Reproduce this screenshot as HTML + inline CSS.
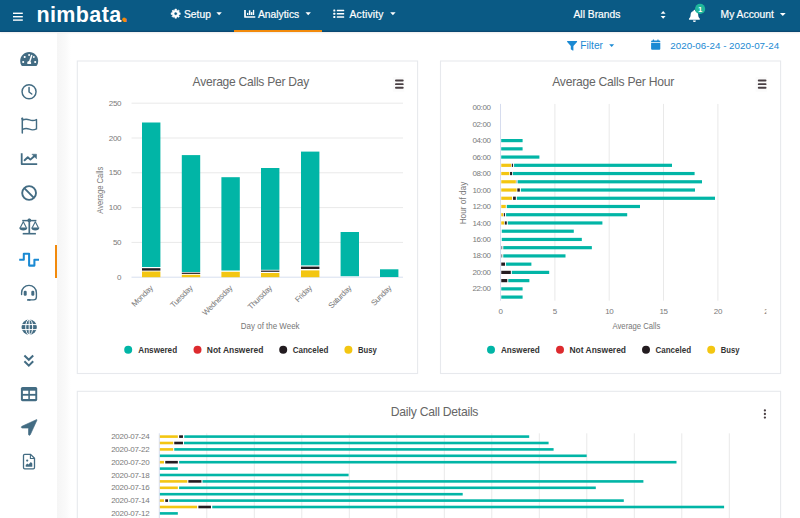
<!DOCTYPE html>
<html lang="en"><head><meta charset="utf-8"><title>nimbata - Analytics</title>
<style>
html,body{margin:0;padding:0}
body{width:800px;height:518px;overflow:hidden;background:#fff;position:relative;font-family:"Liberation Sans",sans-serif;}
#hdr{position:absolute;left:0;top:0;width:800px;height:31.6px;background:#0a5a85;box-shadow:inset 0 -1.2px 0 #0a4872,0 1px 1.5px rgba(0,0,0,.08)}
#hdr .t{position:absolute;color:#fff;font-size:10.3px;line-height:12px;white-space:nowrap;-webkit-text-stroke:.2px #fff}
#logo{position:absolute;left:36.4px;top:2.1px;font-size:21.5px;line-height:26px;font-weight:bold;color:#fff;letter-spacing:0.4px}
#logo b{color:#f28a0c}
#side{position:absolute;left:0;top:31.6px;width:57px;height:487px;background:#fff}
#shade{position:absolute;left:57px;top:33px;width:20px;height:487px;background:linear-gradient(90deg,#f5f5f5,#fafafa 45%,#fff 70%)}
.card{position:absolute;box-sizing:border-box;border:1px solid #e9e9e9;background:#fff}
svg{position:absolute;left:0;top:0}
.ax{font-size:8px;fill:#7a7a7a;font-family:"Liberation Sans",sans-serif;letter-spacing:-0.4px}
.ttl{font-size:12.2px;fill:#666;font-family:"Liberation Sans",sans-serif;letter-spacing:-0.25px}
.at{font-size:9px;fill:#777;font-family:"Liberation Sans",sans-serif}
.lg{font-size:9.1px;font-weight:bold;fill:#333;font-family:"Liberation Sans",sans-serif}
.fl{position:absolute;color:#1b8ad3;font-size:10.2px;line-height:12px;white-space:nowrap}
</style></head><body>
<div id="shade"></div>
<svg width="800" height="518" viewBox="0 0 800 518" fill="#fff" stroke="#e7e9ed" stroke-width="1.1">
<rect x="77.3" y="61" width="340.3" height="312.5"/>
<rect x="440.5" y="61" width="340.1" height="312.5"/>
<rect x="77.3" y="391.3" width="703.3" height="140"/>
</svg>
<svg id="charts" width="800" height="518" viewBox="0 0 800 518">
<line x1="131.5" x2="403" y1="103.2" y2="103.2" stroke="#e9e9e9" stroke-width="1"/>
<text x="121" y="105.8" text-anchor="end" class="ax">250</text>
<line x1="131.5" x2="403" y1="138.0" y2="138.0" stroke="#e9e9e9" stroke-width="1"/>
<text x="121" y="140.6" text-anchor="end" class="ax">200</text>
<line x1="131.5" x2="403" y1="172.8" y2="172.8" stroke="#e9e9e9" stroke-width="1"/>
<text x="121" y="175.4" text-anchor="end" class="ax">150</text>
<line x1="131.5" x2="403" y1="207.6" y2="207.6" stroke="#e9e9e9" stroke-width="1"/>
<text x="121" y="210.2" text-anchor="end" class="ax">100</text>
<line x1="131.5" x2="403" y1="242.4" y2="242.4" stroke="#e9e9e9" stroke-width="1"/>
<text x="121" y="245.0" text-anchor="end" class="ax">50</text>
<text x="121" y="279.8" text-anchor="end" class="ax">0</text>
<line x1="131.5" x2="403" y1="277.2" y2="277.2" stroke="#d3dbee" stroke-width="0.9"/>
<rect x="142.00" y="122.50" width="18.40" height="144.50" fill="#01b5a6"/>
<rect x="142.00" y="268.20" width="18.40" height="2.40" fill="#231c20"/>
<rect x="142.00" y="271.50" width="18.40" height="5.70" fill="#f3c612"/>
<rect x="181.80" y="155.10" width="18.40" height="116.90" fill="#01b5a6"/>
<rect x="181.80" y="272.70" width="18.40" height="1.20" fill="#231c20"/>
<rect x="181.80" y="274.80" width="18.40" height="2.40" fill="#f3c612"/>
<rect x="221.40" y="177.20" width="18.40" height="93.30" fill="#01b5a6"/>
<rect x="221.40" y="271.80" width="18.40" height="5.40" fill="#f3c612"/>
<rect x="261.00" y="168.00" width="18.40" height="101.80" fill="#01b5a6"/>
<rect x="261.00" y="270.60" width="18.40" height="1.20" fill="#231c20"/>
<rect x="261.00" y="273.00" width="18.40" height="4.20" fill="#f3c612"/>
<rect x="301.00" y="151.60" width="18.40" height="113.80" fill="#01b5a6"/>
<rect x="301.00" y="266.60" width="18.40" height="2.40" fill="#231c20"/>
<rect x="301.00" y="270.40" width="18.40" height="6.80" fill="#f3c612"/>
<rect x="340.60" y="232.00" width="18.40" height="44.20" fill="#01b5a6"/>
<rect x="380.00" y="269.30" width="18.40" height="7.70" fill="#01b5a6"/>
<text x="153.2" y="288.7" text-anchor="end" transform="rotate(-45 153.2 288.7)" class="ax">Monday</text>
<text x="193.0" y="288.7" text-anchor="end" transform="rotate(-45 193.0 288.7)" class="ax">Tuesday</text>
<text x="232.7" y="288.7" text-anchor="end" transform="rotate(-45 232.7 288.7)" class="ax">Wednesday</text>
<text x="272.4" y="288.7" text-anchor="end" transform="rotate(-45 272.4 288.7)" class="ax">Thursday</text>
<text x="312.2" y="288.7" text-anchor="end" transform="rotate(-45 312.2 288.7)" class="ax">Friday</text>
<text x="351.9" y="288.7" text-anchor="end" transform="rotate(-45 351.9 288.7)" class="ax">Saturday</text>
<text x="391.7" y="288.7" text-anchor="end" transform="rotate(-45 391.7 288.7)" class="ax">Sunday</text>
<text x="270.2" y="329.2" text-anchor="middle" class="at" textLength="58.7" lengthAdjust="spacingAndGlyphs">Day of the Week</text>
<text x="103" y="190.2" text-anchor="middle" transform="rotate(-90 103 190.2)" class="at" textLength="47.1" lengthAdjust="spacingAndGlyphs">Average Calls</text>
<text x="250.8" y="86.3" text-anchor="middle" class="ttl" textLength="116.4" lengthAdjust="spacingAndGlyphs">Average Calls Per Day</text>
<circle cx="128.2" cy="349.8" r="4" fill="#01b5a6"/>
<text x="138.3" y="352.90000000000003" class="lg" textLength="38.8" lengthAdjust="spacingAndGlyphs">Answered</text>
<circle cx="197.5" cy="349.8" r="4" fill="#dd2a2e"/>
<text x="206.8" y="352.90000000000003" class="lg" textLength="56.5" lengthAdjust="spacingAndGlyphs">Not Answered</text>
<circle cx="283.2" cy="349.8" r="4" fill="#231c20"/>
<text x="292.7" y="352.90000000000003" class="lg" textLength="35.6" lengthAdjust="spacingAndGlyphs">Canceled</text>
<circle cx="348.4" cy="349.8" r="4" fill="#f3c612"/>
<text x="358" y="352.90000000000003" class="lg" textLength="18.7" lengthAdjust="spacingAndGlyphs">Busy</text>
<rect x="392.8" y="77.2" width="11.5" height="14.5" fill="#fbfbfb"/>
<rect x="395.00" y="79.60" width="8.7" height="1.9" rx="0.95" fill="#4a4044"/>
<rect x="395.00" y="83.18" width="8.7" height="1.9" rx="0.95" fill="#4a4044"/>
<rect x="395.00" y="86.76" width="8.7" height="1.9" rx="0.95" fill="#4a4044"/>
<line x1="554.9" x2="554.9" y1="103.9" y2="300.7" stroke="#e9e9e9" stroke-width="1"/>
<line x1="609.2" x2="609.2" y1="103.9" y2="300.7" stroke="#e9e9e9" stroke-width="1"/>
<line x1="663.5" x2="663.5" y1="103.9" y2="300.7" stroke="#e9e9e9" stroke-width="1"/>
<line x1="717.9" x2="717.9" y1="103.9" y2="300.7" stroke="#e9e9e9" stroke-width="1"/>
<line x1="500.5" x2="500.5" y1="103.9" y2="300.7" stroke="#d6dcee" stroke-width="1"/>
<text x="500.5" y="314.4" text-anchor="middle" class="ax">0</text>
<text x="554.9" y="314.4" text-anchor="middle" class="ax">5</text>
<text x="609.2" y="314.4" text-anchor="middle" class="ax">10</text>
<text x="663.5" y="314.4" text-anchor="middle" class="ax">15</text>
<text x="717.9" y="314.4" text-anchor="middle" class="ax">20</text>
<clipPath id="cl25"><rect x="700" y="300" width="66.5" height="30"/></clipPath>
<text x="764.3" y="314.4" class="ax" clip-path="url(#cl25)">25</text>
<text x="490.5" y="110.2" text-anchor="end" class="ax">00:00</text>
<text x="490.5" y="126.6" text-anchor="end" class="ax">02:00</text>
<text x="490.5" y="143.1" text-anchor="end" class="ax">04:00</text>
<text x="490.5" y="159.6" text-anchor="end" class="ax">06:00</text>
<text x="490.5" y="176.0" text-anchor="end" class="ax">08:00</text>
<text x="490.5" y="192.5" text-anchor="end" class="ax">10:00</text>
<text x="490.5" y="209.0" text-anchor="end" class="ax">12:00</text>
<text x="490.5" y="225.5" text-anchor="end" class="ax">14:00</text>
<text x="490.5" y="241.9" text-anchor="end" class="ax">16:00</text>
<text x="490.5" y="258.4" text-anchor="end" class="ax">18:00</text>
<text x="490.5" y="274.9" text-anchor="end" class="ax">20:00</text>
<text x="490.5" y="291.4" text-anchor="end" class="ax">22:00</text>
<rect x="501.20" y="139.00" width="21.40" height="3.20" fill="#01b5a6"/>
<rect x="501.20" y="147.24" width="21.40" height="3.20" fill="#01b5a6"/>
<rect x="501.20" y="155.47" width="38.20" height="3.20" fill="#01b5a6"/>
<rect x="501.27" y="163.71" width="9.79" height="3.20" fill="#f3c612"/>
<rect x="511.81" y="163.71" width="1.25" height="3.20" fill="#231c20"/>
<rect x="514.07" y="163.71" width="157.93" height="3.20" fill="#01b5a6"/>
<rect x="501.27" y="171.95" width="8.03" height="3.20" fill="#f3c612"/>
<rect x="510.05" y="171.95" width="2.01" height="3.20" fill="#231c20"/>
<rect x="512.81" y="171.95" width="181.79" height="3.20" fill="#01b5a6"/>
<rect x="501.27" y="180.18" width="14.55" height="3.20" fill="#f3c612"/>
<rect x="516.32" y="180.18" width="0.50" height="3.20" fill="#888"/>
<rect x="517.58" y="180.18" width="184.42" height="3.20" fill="#01b5a6"/>
<rect x="501.27" y="188.42" width="15.31" height="3.20" fill="#f3c612"/>
<rect x="517.33" y="188.42" width="2.51" height="3.20" fill="#231c20"/>
<rect x="520.84" y="188.42" width="174.16" height="3.20" fill="#01b5a6"/>
<rect x="501.27" y="196.66" width="10.79" height="3.20" fill="#f3c612"/>
<rect x="513.06" y="196.66" width="2.76" height="3.20" fill="#231c20"/>
<rect x="516.83" y="196.66" width="198.17" height="3.20" fill="#01b5a6"/>
<rect x="501.27" y="204.89" width="4.52" height="3.20" fill="#f3c612"/>
<rect x="506.79" y="204.89" width="133.21" height="3.20" fill="#01b5a6"/>
<rect x="501.27" y="213.13" width="1.76" height="3.20" fill="#f3c612"/>
<rect x="503.78" y="213.13" width="1.25" height="3.20" fill="#231c20"/>
<rect x="506.04" y="213.13" width="121.16" height="3.20" fill="#01b5a6"/>
<rect x="501.27" y="221.37" width="2.76" height="3.20" fill="#f3c612"/>
<rect x="504.78" y="221.37" width="2.01" height="3.20" fill="#231c20"/>
<rect x="507.79" y="221.37" width="94.61" height="3.20" fill="#01b5a6"/>
<rect x="501.77" y="229.61" width="72.02" height="3.20" fill="#01b5a6"/>
<rect x="501.77" y="237.84" width="80.05" height="3.20" fill="#01b5a6"/>
<rect x="501.27" y="246.08" width="1.00" height="3.20" fill="#777"/>
<rect x="503.27" y="246.08" width="88.58" height="3.20" fill="#01b5a6"/>
<rect x="501.27" y="254.32" width="1.00" height="3.20" fill="#777"/>
<rect x="503.27" y="254.32" width="62.23" height="3.20" fill="#01b5a6"/>
<rect x="501.27" y="262.55" width="3.76" height="3.20" fill="#231c20"/>
<rect x="506.04" y="262.55" width="25.35" height="3.20" fill="#01b5a6"/>
<rect x="501.27" y="270.79" width="9.54" height="3.20" fill="#231c20"/>
<rect x="511.81" y="270.79" width="37.39" height="3.20" fill="#01b5a6"/>
<rect x="501.27" y="279.03" width="6.02" height="3.20" fill="#231c20"/>
<rect x="508.29" y="279.03" width="21.08" height="3.20" fill="#01b5a6"/>
<rect x="501.27" y="287.26" width="21.33" height="3.20" fill="#01b5a6"/>
<rect x="501.27" y="295.50" width="21.33" height="3.20" fill="#01b5a6"/>
<text x="636.4" y="329.2" text-anchor="middle" class="at" textLength="47.7" lengthAdjust="spacingAndGlyphs">Average Calls</text>
<text x="466" y="203" text-anchor="middle" transform="rotate(-90 466 203)" class="at" textLength="42.7" lengthAdjust="spacingAndGlyphs">Hour of day</text>
<text x="613.1" y="86.3" text-anchor="middle" class="ttl" textLength="121.8" lengthAdjust="spacingAndGlyphs">Average Calls Per Hour</text>
<circle cx="491" cy="349.8" r="4" fill="#01b5a6"/>
<text x="501" y="352.90000000000003" class="lg" textLength="38.8" lengthAdjust="spacingAndGlyphs">Answered</text>
<circle cx="560" cy="349.8" r="4" fill="#dd2a2e"/>
<text x="569.5" y="352.90000000000003" class="lg" textLength="56.5" lengthAdjust="spacingAndGlyphs">Not Answered</text>
<circle cx="646" cy="349.8" r="4" fill="#231c20"/>
<text x="655.5" y="352.90000000000003" class="lg" textLength="35.6" lengthAdjust="spacingAndGlyphs">Canceled</text>
<circle cx="711.2" cy="349.8" r="4" fill="#f3c612"/>
<text x="720.7" y="352.90000000000003" class="lg" textLength="18.7" lengthAdjust="spacingAndGlyphs">Busy</text>
<rect x="755.5999999999999" y="77.2" width="11.5" height="14.5" fill="#fbfbfb"/>
<rect x="757.80" y="79.60" width="8.7" height="1.9" rx="0.95" fill="#4a4044"/>
<rect x="757.80" y="83.18" width="8.7" height="1.9" rx="0.95" fill="#4a4044"/>
<rect x="757.80" y="86.76" width="8.7" height="1.9" rx="0.95" fill="#4a4044"/>
<line x1="206.8" x2="206.8" y1="433.3" y2="518" stroke="#e9e9e9" stroke-width="1"/>
<line x1="254.3" x2="254.3" y1="433.3" y2="518" stroke="#e9e9e9" stroke-width="1"/>
<line x1="301.8" x2="301.8" y1="433.3" y2="518" stroke="#e9e9e9" stroke-width="1"/>
<line x1="349.3" x2="349.3" y1="433.3" y2="518" stroke="#e9e9e9" stroke-width="1"/>
<line x1="396.8" x2="396.8" y1="433.3" y2="518" stroke="#e9e9e9" stroke-width="1"/>
<line x1="444.3" x2="444.3" y1="433.3" y2="518" stroke="#e9e9e9" stroke-width="1"/>
<line x1="491.8" x2="491.8" y1="433.3" y2="518" stroke="#e9e9e9" stroke-width="1"/>
<line x1="539.3" x2="539.3" y1="433.3" y2="518" stroke="#e9e9e9" stroke-width="1"/>
<line x1="586.8" x2="586.8" y1="433.3" y2="518" stroke="#e9e9e9" stroke-width="1"/>
<line x1="634.3" x2="634.3" y1="433.3" y2="518" stroke="#e9e9e9" stroke-width="1"/>
<line x1="681.8" x2="681.8" y1="433.3" y2="518" stroke="#e9e9e9" stroke-width="1"/>
<line x1="729.3" x2="729.3" y1="433.3" y2="518" stroke="#e9e9e9" stroke-width="1"/>
<line x1="159.3" x2="159.3" y1="433.3" y2="518" stroke="#d6dcee" stroke-width="1"/>
<rect x="159.86" y="435.30" width="17.97" height="2.60" fill="#f3c612"/>
<rect x="179.11" y="435.30" width="3.85" height="2.60" fill="#231c20"/>
<rect x="184.25" y="435.30" width="344.95" height="2.60" fill="#01b5a6"/>
<text x="149.2" y="439.1" text-anchor="end" class="ax" textLength="38">2020-07-24</text>
<rect x="159.86" y="441.70" width="13.35" height="2.60" fill="#f3c612"/>
<rect x="174.24" y="441.70" width="8.73" height="2.60" fill="#231c20"/>
<rect x="183.99" y="441.70" width="364.61" height="2.60" fill="#01b5a6"/>
<rect x="159.86" y="448.10" width="13.35" height="2.60" fill="#f3c612"/>
<rect x="174.24" y="448.10" width="379.36" height="2.60" fill="#01b5a6"/>
<text x="149.2" y="451.9" text-anchor="end" class="ax" textLength="38">2020-07-22</text>
<rect x="159.86" y="454.50" width="426.84" height="2.60" fill="#01b5a6"/>
<rect x="159.86" y="460.90" width="4.11" height="2.60" fill="#f3c612"/>
<rect x="165.25" y="460.90" width="12.58" height="2.60" fill="#231c20"/>
<rect x="179.11" y="460.90" width="497.39" height="2.60" fill="#01b5a6"/>
<text x="149.2" y="464.7" text-anchor="end" class="ax" textLength="38">2020-07-20</text>
<rect x="159.86" y="467.30" width="17.97" height="2.60" fill="#01b5a6"/>
<rect x="159.86" y="473.70" width="188.74" height="2.60" fill="#01b5a6"/>
<text x="149.2" y="477.5" text-anchor="end" class="ax" textLength="38">2020-07-18</text>
<rect x="159.86" y="480.10" width="27.47" height="2.60" fill="#f3c612"/>
<rect x="188.36" y="480.10" width="13.09" height="2.60" fill="#231c20"/>
<rect x="202.48" y="480.10" width="440.92" height="2.60" fill="#01b5a6"/>
<rect x="159.86" y="486.50" width="17.97" height="2.60" fill="#f3c612"/>
<rect x="179.11" y="486.50" width="416.69" height="2.60" fill="#01b5a6"/>
<text x="149.2" y="490.3" text-anchor="end" class="ax" textLength="38">2020-07-16</text>
<rect x="159.86" y="492.90" width="302.84" height="2.60" fill="#01b5a6"/>
<rect x="159.86" y="499.30" width="4.11" height="2.60" fill="#f3c612"/>
<rect x="165.25" y="499.30" width="2.82" height="2.60" fill="#231c20"/>
<rect x="169.36" y="499.30" width="454.44" height="2.60" fill="#01b5a6"/>
<text x="149.2" y="503.1" text-anchor="end" class="ax" textLength="38">2020-07-14</text>
<rect x="159.86" y="505.70" width="37.23" height="2.60" fill="#f3c612"/>
<rect x="198.37" y="505.70" width="12.58" height="2.60" fill="#231c20"/>
<rect x="212.23" y="505.70" width="511.87" height="2.60" fill="#01b5a6"/>
<rect x="159.86" y="512.10" width="17.97" height="2.60" fill="#01b5a6"/>
<text x="149.2" y="515.9" text-anchor="end" class="ax" textLength="38">2020-07-12</text>
<text x="434.5" y="415.7" text-anchor="middle" class="ttl" textLength="87.4" lengthAdjust="spacingAndGlyphs">Daily Call Details</text>
<circle cx="764.9" cy="410.4" r="1.15" fill="#4a4044"/>
<circle cx="764.9" cy="414.0" r="1.15" fill="#4a4044"/>
<circle cx="764.9" cy="417.6" r="1.15" fill="#4a4044"/>
</svg>
<div class="fl" style="left:580.3px;top:40.2px">Filter</div>
<div class="fl" style="left:670.3px;top:39.5px;font-size:9.8px">2020-06-24 - 2020-07-24</div>
<svg width="800" height="518" viewBox="0 0 800 518" style="pointer-events:none"><path d="M567.3 41.100h9.300c.5 0 .7.500.4.900l-3.600 4v4.200c0 .4-.4.600-.7.400l-1.600-1.100c-.2-.1-.3-.3-.3-.5v-3l-3.600-4c-.3-.4-.1-.9.400-.9z" fill="#1b8ad3"/>
<path d="M609.2 44.2h4.9l-2.45 2.7z" fill="#1b8ad3"/>
<path d="M651.100 42.900h9.200v5.800a1 1 0 0 1-1 1h-7.200a1 1 0 0 1-1-1z M652.100 40.600h7.200a1 1 0 0 1 1 1v.7h-9.200v-.7a1 1 0 0 1 1-1z" fill="#1b8ad3"/>
<rect x="652.8" y="39.400" width="1.300" height="2.200" rx=".4" fill="#1b8ad3"/><rect x="657.300" y="39.400" width="1.300" height="2.200" rx=".4" fill="#1b8ad3"/></svg>
<div id="side"></div>
<div style="position:absolute;left:55px;top:244.500px;width:2px;height:33px;background:#f28a0c"></div>
<svg width="800" height="518" viewBox="0 0 800 518"><g transform="translate(20.2 50.9) scale(0.03125)"><path d="M288 32C128.940 32 0 160.940 0 320c0 52.800 14.250 102.260 39.060 144.800 5.610 9.620 16.300 15.200 27.440 15.200h443c11.140 0 21.830-5.580 27.440-15.200C561.750 422.260 576 372.800 576 320c0-159.060-128.940-288-288-288zm0 64c14.710 0 26.580 10.130 30.320 23.650-1.110 2.260-2.640 4.230-3.450 6.670l-9.220 27.670c-5.130 3.490-10.970 6.010-17.640 6.010-17.670 0-32-14.330-32-32S270.330 96 288 96zM96 384c-17.670 0-32-14.330-32-32s14.330-32 32-32 32 14.330 32 32-14.330 32-32 32zm48-160c-17.670 0-32-14.330-32-32s14.330-32 32-32 32 14.330 32 32-14.330 32-32 32zm246.770-72.410l-61.330 184C343.130 347.330 352 364.540 352 384c0 11.720-3.380 22.550-8.880 32H232.880c-5.500-9.450-8.880-20.280-8.880-32 0-33.940 26.500-61.430 59.900-63.590l61.340-184.010c4.170-12.560 17.730-19.450 30.360-15.170 12.570 4.190 19.350 17.790 15.170 30.360zm14.660 57.200l15.520-46.550c3.470-1.290 7.130-2.230 11.050-2.230 17.670 0 32 14.330 32 32s-14.330 32-32 32c-11.380-.010-20.890-6.280-26.570-15.220zM480 384c-17.670 0-32-14.330-32-32s14.330-32 32-32 32 14.330 32 32-14.330 32-32 32z" fill="#436c83"/></g>
<circle cx="29.050" cy="91.800" r="7" fill="none" stroke="#436c83" stroke-width="1.450"/>
<path d="M29.050 87.600v4.400l2.700 2" fill="none" stroke="#436c83" stroke-width="1.500" stroke-linecap="round" stroke-linejoin="round"/>
<path d="M22.300 118.500v14.600" fill="none" stroke="#436c83" stroke-width="1.500" stroke-linecap="round"/><circle cx="22.300" cy="118.700" r="1.100" fill="#436c83"/>
<path d="M22.500 120.100c2.600-1.300 4.800-1.100 7 -.2s4.300 1 7-.3v9.300c-2.700 1.300-4.800 1.200-7 .3s-4.400-1.100-7 .2" fill="none" stroke="#436c83" stroke-width="1.400" stroke-linejoin="round"/>
<path d="M21.700 153.300v10.800h15.500" fill="none" stroke="#436c83" stroke-width="1.800" stroke-linejoin="round"/>
<path d="M24.600 160.300l3.200-3 2.600 2.300 3.800-3.400" fill="none" stroke="#436c83" stroke-width="1.900" stroke-linejoin="round" stroke-linecap="round"/>
<path d="M31.900 154.200h4.600v4.600z" fill="#436c83" stroke="#436c83" stroke-width=".5" stroke-linejoin="round"/>
<circle cx="29.100" cy="193" r="6.900" fill="none" stroke="#436c83" stroke-width="1.900"/>
<path d="M24.300 188.200l9.600 9.600" stroke="#436c83" stroke-width="1.900"/>
<path d="M29.300 218.800v14.200" stroke="#436c83" stroke-width="1.700"/>
<path d="M22.200 220.600h14.200" stroke="#436c83" stroke-width="1.500"/>
<circle cx="29.300" cy="220.300" r="1.900" fill="#436c83"/>
<path d="M22.700 233.700h13.200" stroke="#436c83" stroke-width="1.600"/>
<path d="M20.2 227.800l3.100-6 3.100 6" fill="none" stroke="#436c83" stroke-width="1.100" stroke-linejoin="round"/>
<path d="M19.200000000000003 227.600h8.200c0 1.800-1.800 2.900-4.100 2.900s-4.100-1.100-4.100-2.900z" fill="#436c83"/>
<path d="M32.199999999999996 227.800l3.100-6 3.100 6" fill="none" stroke="#436c83" stroke-width="1.100" stroke-linejoin="round"/>
<path d="M31.199999999999996 227.600h8.200c0 1.800-1.800 2.900-4.100 2.900s-4.100-1.100-4.100-2.900z" fill="#436c83"/>
<path d="M19.200 259.700h4.600v-5.900h5.300v11.800h5.300v-5.900h4.600" fill="none" stroke="#1b8ad3" stroke-width="2.050" stroke-linejoin="round"/>
<path d="M21.600 294.600v-1.800a7.400 7.400 0 0 1 14.800 0v4.200c0 1.700-1.300 2.900-3 2.900h-4" fill="none" stroke="#436c83" stroke-width="1.400" stroke-linecap="round"/>
<rect x="23.700" y="290.800" width="3" height="5" rx="1.200" fill="#436c83"/><rect x="31.300" y="290.800" width="3" height="5" rx="1.200" fill="#436c83"/>
<rect x="27" y="298.900" width="3.600" height="1.900" rx=".9" fill="#436c83"/>
<circle cx="29.200" cy="327.100" r="7.700" fill="#436c83"/>
<ellipse cx="29.200" cy="327.100" rx="3.500" ry="7.700" fill="none" stroke="#fff" stroke-width="1"/>
<path d="M29.200 319v16.200M21 324.600h16.400M21 329.600h16.400" stroke="#fff" stroke-width="1" fill="none"/>
<path d="M24.400 355.500l4.400 4.300 4.400-4.300M24.400 361.300l4.400 4.300 4.400-4.300" fill="none" stroke="#436c83" stroke-width="2" stroke-linejoin="miter"/>
<rect x="20.900" y="387" width="16.300" height="14.200" rx="1.600" fill="#436c83"/>
<rect x="22.900" y="390.700" width="5.400" height="3.200" fill="#fff"/><rect x="29.900" y="390.700" width="5.400" height="3.200" fill="#fff"/><rect x="22.900" y="395.700" width="5.400" height="3.300" fill="#fff"/><rect x="29.900" y="395.700" width="5.400" height="3.300" fill="#fff"/>
<path d="M36.300 419.700l-14.400 6.600c-1 .5-.7 1.800.4 1.800h6.200v6.200c0 1.100 1.300 1.400 1.800.4l6.600-14.400c.3-.5-.1-.9-.6-.6z" fill="#436c83" stroke="#436c83" stroke-width=".6" stroke-linejoin="round"/>
<path d="M24.700 454.400h5.900l3.900 3.900v9.300a1.200 1.200 0 0 1-1.200 1.200h-8.600a1.200 1.200 0 0 1-1.200-1.200v-12a1.200 1.200 0 0 1 1.200-1.200z" fill="none" stroke="#436c83" stroke-width="1.300" stroke-linejoin="round"/>
<path d="M30.400 454.600v3.900h3.900" fill="none" stroke="#436c83" stroke-width="1.100"/>
<circle cx="27.200" cy="460.600" r="1.100" fill="#436c83"/>
<path d="M25.700 466.700v-1.700l1.600-1.500 1.200 1.100 2.400-2.700 1.400 1.500v3.300z" fill="#436c83"/></svg>
<div id="hdr">
<div id="logo">nimbata<b>.</b></div>
<div class="t" style="left:184px;top:8.7px">Setup</div>
<div class="t" style="left:258px;top:8.7px">Analytics</div>
<div class="t" style="left:349.5px;top:8.7px;letter-spacing:.2px">Activity</div>
<div class="t" style="left:573.5px;top:8.9px">All Brands</div>
<div class="t" style="left:720.6px;top:8.9px">My Account</div>
<div style="position:absolute;left:233.9px;top:29.7px;width:88.3px;height:2.3px;background:#f28a0c"></div>
<svg width="800" height="31" viewBox="0 0 800 31"><rect x="13" y="12.6" width="9.8" height="1.4" fill="#fff"/>
<rect x="13" y="16.0" width="9.8" height="1.4" fill="#fff"/>
<rect x="13" y="19.4" width="9.8" height="1.4" fill="#fff"/>
<circle cx="124.100" cy="19.400" r="1.900" fill="#f28a0c"/>
<path d="M179.10 12.81 L180.23 12.86 L180.23 14.44 L179.10 14.49 L178.70 15.46 L179.46 16.30 L178.35 17.41 L177.51 16.65 L176.54 17.05 L176.49 18.18 L174.91 18.18 L174.86 17.05 L173.89 16.65 L173.05 17.41 L171.94 16.30 L172.70 15.46 L172.30 14.49 L171.17 14.44 L171.17 12.86 L172.30 12.81 L172.70 11.84 L171.94 11.00 L173.05 9.89 L173.89 10.65 L174.86 10.25 L174.91 9.12 L176.49 9.12 L176.54 10.25 L177.51 10.65 L178.35 9.89 L179.46 11.00 L178.70 11.84Z M174.05 13.65 a1.65 1.65 0 1 0 3.3 0 a1.65 1.65 0 1 0 -3.3 0Z" fill="#fff" fill-rule="evenodd" stroke="#fff" stroke-width="0.6" stroke-linejoin="round"/>
<path d="M216.4 12.2h5.4l-2.7 3z" fill="#fff"/>
<path d="M245 9.9v7.100h10.300" fill="none" stroke="#fff" stroke-width="1.700" stroke-linejoin="round"/>
<rect x="247" y="12.9" width="1.3" height="2.1" fill="#fff"/>
<rect x="248.9" y="10.3" width="1.5" height="4.7" fill="#fff"/>
<rect x="250.9" y="12.1" width="1.5" height="2.9" fill="#fff"/>
<rect x="252.9" y="9.9" width="1.3" height="5.1" fill="#fff"/>
<path d="M305.5 12.2h5.4l-2.7 3z" fill="#fff"/>
<rect x="333.3" y="9.55" width="2" height="1.9" rx=".5" fill="#fff"/>
<rect x="336.8" y="9.65" width="7.4" height="1.7" rx=".4" fill="#fff"/>
<rect x="333.3" y="12.80" width="2" height="1.9" rx=".5" fill="#fff"/>
<rect x="336.8" y="12.90" width="7.4" height="1.7" rx=".4" fill="#fff"/>
<rect x="333.3" y="16.05" width="2" height="1.9" rx=".5" fill="#fff"/>
<rect x="336.8" y="16.15" width="7.4" height="1.7" rx=".4" fill="#fff"/>
<path d="M390.2 12.2h5.4l-2.7 3z" fill="#fff"/>
<path d="M660.7 13.7l2.45-2.8 2.45 2.8z M660.7 15.9h4.9l-2.45 2.8z" fill="#fff"/>
<path d="M694.4 9.7c.5 0 .8.3.8.8v.4c1.9.4 3 1.900 3 3.800 0 2.100.6 2.900 1.500 3.700.5.500.2 1.300-.5 1.300h-9.600c-.7 0-1-.8-.5-1.300.9-.8 1.500-1.600 1.500-3.700 0-1.900 1.100-3.400 3-3.800v-.4c0-.5.300-.8.800-.8z" fill="#fff"/>
<path d="M692.9 20.5h3a1.500 1.500 0 0 1-3 0z" fill="#fff"/>
<circle cx="700.1" cy="8.9" r="5.1" fill="#1fb79b"/>
<text x="700.1" y="11.6" text-anchor="middle" font-size="7.6" font-weight="bold" fill="#fff" font-family="Liberation Sans, sans-serif">1</text>
<path d="M779.9 13.1h5.8l-2.9 3z" fill="#fff"/></svg>
</div>
</body></html>
